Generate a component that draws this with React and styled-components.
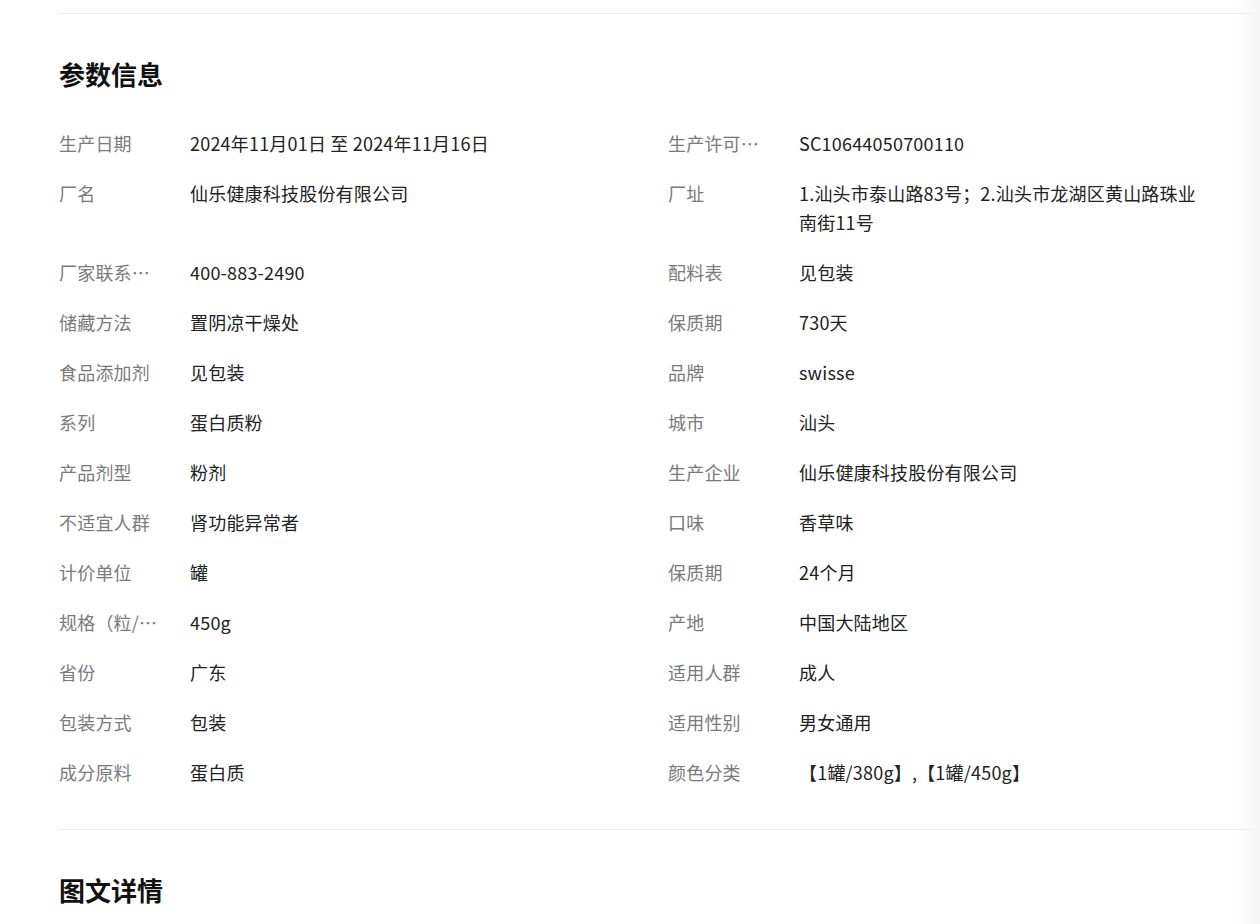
import React from "react";
import styled, { createGlobalStyle } from "styled-components";

const Global = createGlobalStyle`
  body { margin: 0; background: #fff; font-family: "Noto Sans CJK SC", "Noto Sans", sans-serif; }
`;
const Page = styled.div`
  position: relative; padding: 13px 0 0 59px; height: 924px; box-sizing: border-box; overflow: hidden;
`;
const Fade = styled.div`
  position: absolute; top: 0; right: 0; width: 24px; height: 100%;
  background: linear-gradient(to right, rgba(255,255,255,0), rgba(240,240,240,0.6));
`;
const Section = styled.section`
  width: 1196px; border-top: 1px solid #ececec; padding-top: 42px;
`;
const Title = styled.h2`
  margin: 0; font-size: 26px; line-height: 36px; font-weight: 700; color: #111;
`;
const Grid = styled.div`
  display: grid; grid-template-columns: 609px 587px; margin: 26px 0 32px;
`;
const Row = styled.div`
  display: flex; padding: 10.5px 0; font-size: 18px; line-height: 29px; letter-spacing: 0.2px;
`;
const Label = styled.div`
  width: 131px; flex: none; color: #7a7a7a; white-space: nowrap; overflow: hidden; text-overflow: ellipsis; padding-right: 24px; box-sizing: border-box;
`;
const Value = styled.div`
  color: #222; flex: 1; padding-right: 50px;
`;

const rows = [
  ["生产日期", "2024年11月01日 至 2024年11月16日", "生产许可证编号", "SC10644050700110"],
  ["厂名", "仙乐健康科技股份有限公司", "厂址", "1.汕头市泰山路83号；2.汕头市龙湖区黄山路珠业南街11号"],
  ["厂家联系方式", "400-883-2490", "配料表", "见包装"],
  ["储藏方法", "置阴凉干燥处", "保质期", "730天"],
  ["食品添加剂", "见包装", "品牌", "swisse"],
  ["系列", "蛋白质粉", "城市", "汕头"],
  ["产品剂型", "粉剂", "生产企业", "仙乐健康科技股份有限公司"],
  ["不适宜人群", "肾功能异常者", "口味", "香草味"],
  ["计价单位", "罐", "保质期", "24个月"],
  ["规格（粒/袋/ml/g）", "450g", "产地", "中国大陆地区"],
  ["省份", "广东", "适用人群", "成人"],
  ["包装方式", "包装", "适用性别", "男女通用"],
  ["成分原料", "蛋白质", "颜色分类", "【1罐/380g】,【1罐/450g】"],
];

export default function App() {
  return (
    <Page>
      <Global />
      <Section>
        <Title>参数信息</Title>
        <Grid>
          {rows.flatMap((r, i) => [
            <Row key={i + "a"}><Label title={r[0]}>{r[0]}</Label><Value>{r[1]}</Value></Row>,
            <Row key={i + "b"}><Label title={r[2]}>{r[2]}</Label><Value>{r[3]}</Value></Row>,
          ])}
        </Grid>
      </Section>
      <Section>
        <Title>图文详情</Title>
      </Section>
      <Fade />
    </Page>
  );
}
